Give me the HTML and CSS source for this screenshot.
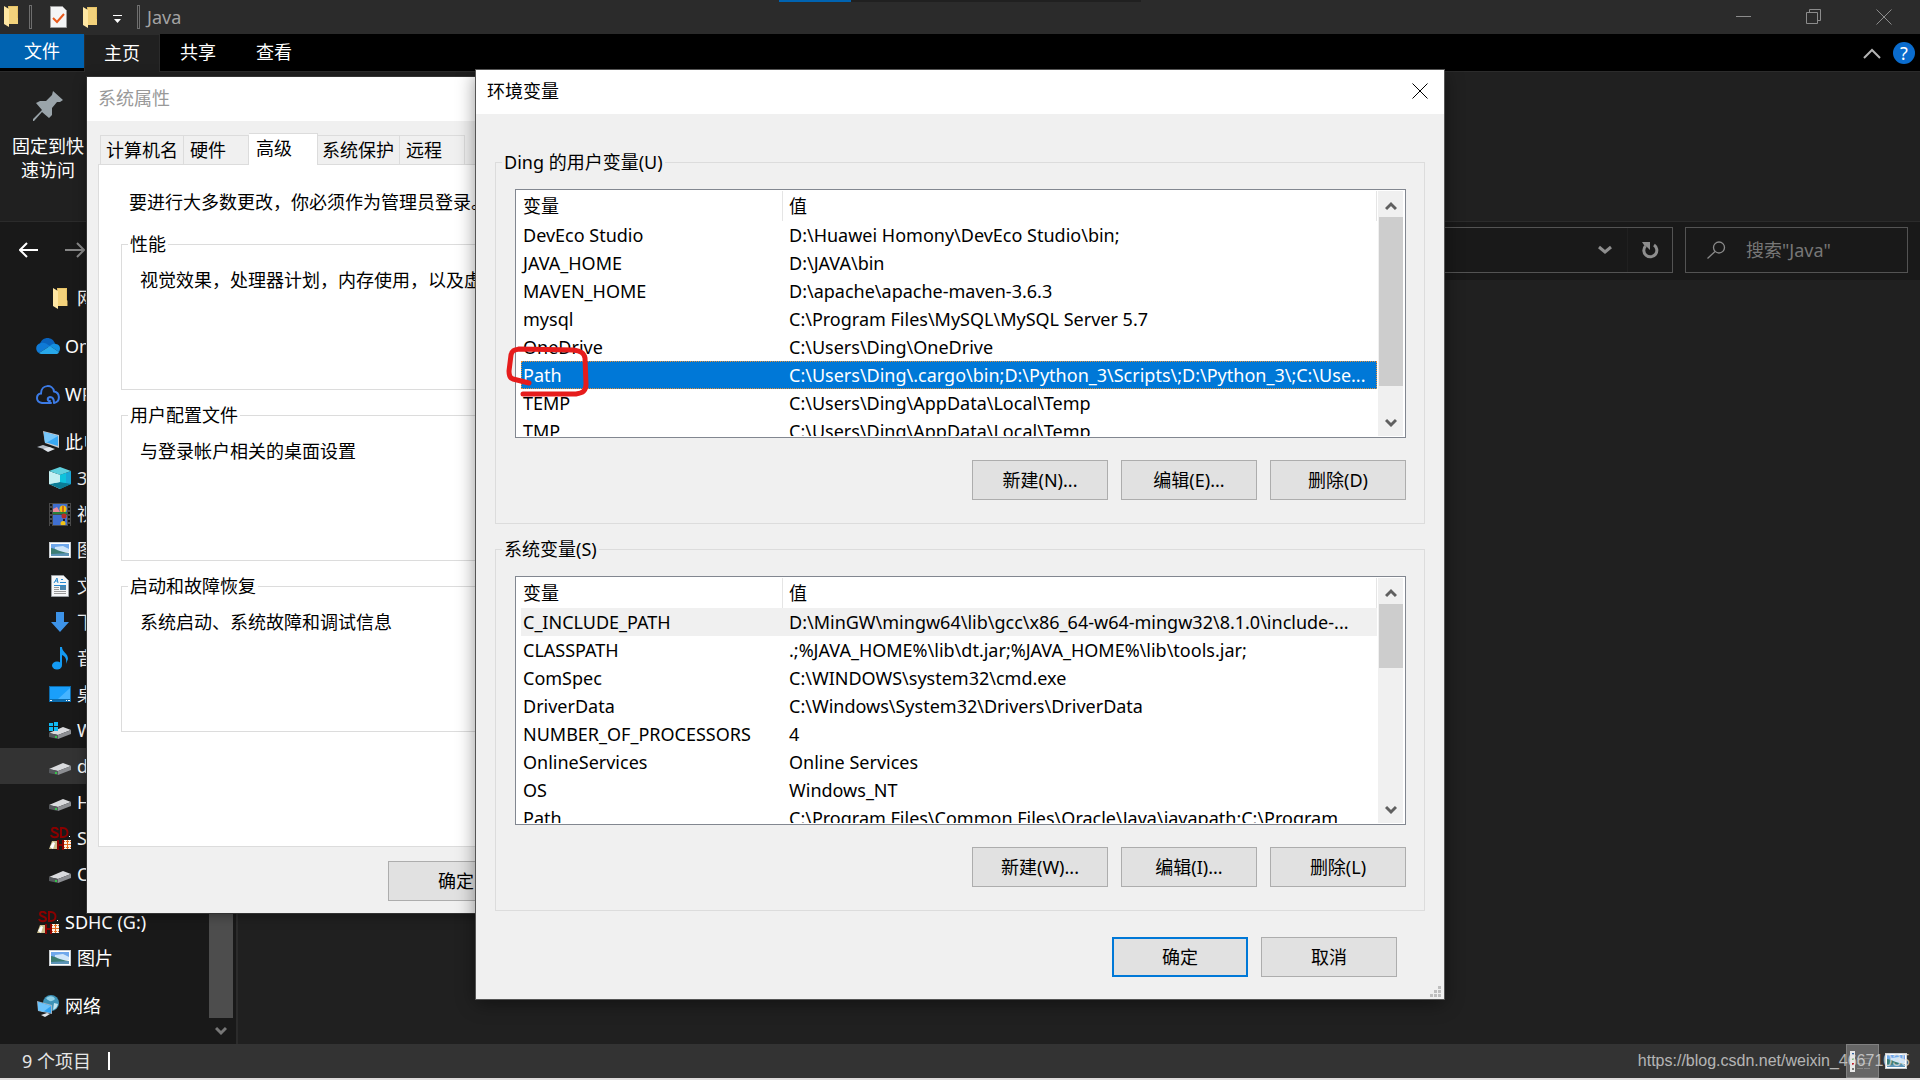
FILE: index.html
```html
<!DOCTYPE html>
<html lang="zh-CN">
<head>
<meta charset="utf-8">
<title>Java</title>
<link rel="stylesheet" href="styles.css">
</head>
<body>
<svg class="defs" width="0" height="0" aria-hidden="true">
  <symbol id="i-folder" viewBox="0 0 14 21"><path fill="#e9c467" d="M4 0h10v12l.500 1v5H5z"/><path fill="#ffe7a3" d="M0 0l5 3v18l-5-3z"/><path fill="#f3d27b" d="M5 1h8v11h1v6H5z"/></symbol>
  <symbol id="i-onedrive" viewBox="0 0 24 16"><path fill="#0a63bd" d="M4 6C6-2 17-2 19 6l-5 4z"/><path fill="#0f7ad6" d="M5 5c3-1 5 0 9 3L3 15C-1 13-1 6 5 5z"/><path fill="#1490df" d="M14 8c3-3 5-2 6-2 4 0 5 5 3 8z"/><path fill="#28a8ea" d="M14 8l9 6c-1 2-2 2-3 2H5c-1 0-2-1-2-1z"/></symbol>
  <symbol id="i-wps" viewBox="0 0 24 19"><path fill="none" stroke="#3c7be6" stroke-width="2" stroke-linecap="round" d="M15 18H6C-1 17 0 9 5 8.500 5-1 17-1 18 6.500c6 1 7 10 0 11.500M18 18c0-3-1-6-4-6-3 .500-3 4 0 4"/></symbol>
  <symbol id="i-pc" viewBox="0 0 24 22"><path fill="#c3c8cf" d="M7 0l16 4v13L9 12z"/><path fill="#39a9f5" d="M8 1l14 4v10L9 11z"/><path fill="#78c8fb" d="M8 1l14 4-12 7H9z"/><path fill="#b5bdc7" d="M1 16l6-2 9 3-5 2z"/><path fill="#dfe4ea" d="M7 18l6-2 6 2-7 3z"/></symbol>
  <symbol id="i-3d" viewBox="0 0 22 22"><path fill="#d7f6f7" d="M0 4l11 4v14L0 17z"/><path fill="#1aa7d6" d="M22 4L11 8v14l11-5z"/><path fill="#5fd0dd" d="M0 4l11-4 11 4-11 4z"/><path fill="#0b7c95" d="M11 15l11 2-11 5-11-5z"/><path fill="#c5f0f2" d="M0 5l11 3v7L0 17z"/><path fill="#0fc3dc" d="M11 8l6-2v10l-6-1z"/></symbol>
  <symbol id="i-video" viewBox="0 0 22 23"><path fill="#4a4a4a" d="M0 0h22v23H0z"/><path fill="#3f6fd0" d="M4 1h14v10H4zM4 12h14v10H4z"/><path stroke="#111" stroke-width="2" stroke-dasharray="2 2" d="M2 1v22M20 1v22"/><path fill="#e98a9b" d="M4 6l4-2 3 5H4z"/><circle cx="14" cy="6" r="3.500" fill="#f3c213"/><path stroke="#b01818" d="M14 3v6"/><path fill="#27813b" d="M4 9h14v2H4z"/><circle cx="15" cy="13" r="2.500" fill="#b82b24"/><path fill="#222" d="M14 16h2v2h-2z"/><circle cx="14" cy="20.500" r="2.500" fill="#f3c213"/><path fill="#4a4a4a" d="M4 22h14v1H4z"/></symbol>
  <symbol id="i-pic" viewBox="0 0 22 16"><path fill="#c9cdd0" d="M0 0h22v16H0z"/><path fill="#fff" d="M1 1h20v14H1z"/><path fill="#6fa8ec" d="M2 2h18v7H2z"/><path fill="#cfe6fa" d="M6 5l8-1 6 3v3H6z"/><path fill="#3c7d73" d="M2 6c4 0 8 4 18 5v3H2z"/><path fill="#5c94b8" d="M2 12l18-1v3H2z"/></symbol>
  <symbol id="i-doc" viewBox="0 0 18 22"><path fill="#f5f7f8" stroke="#9a9fa3" d="M.500.500h12l5 5v16H.500z"/><path stroke="#2889d0" fill="none" d="M3 8l3-5 1 5M4 6h3M10 4.500h2M9 7.500h6M3 10.500h12"/><path stroke="#999" d="M3 12.500h5M3 14.500h5M3 16.500h12M3 18.500h12"/><path fill="#4c86ad" d="M9 11h6v4H9z"/></symbol>
  <symbol id="i-down" viewBox="0 0 18 20"><path fill="#3d93e8" d="M5 0h8v10h5l-9 10L0 10h5z"/></symbol>
  <symbol id="i-music" viewBox="0 0 16 23"><ellipse cx="5" cy="18.500" rx="5" ry="4" fill="#149bf3"/><path fill="#149bf3" d="M8 0h2c0 5 6 6 6 12l-2 5c1-5-1-8-4-9v10H8z"/></symbol>
  <symbol id="i-desk" viewBox="0 0 22 16"><path fill="#0c6cad" d="M0 0h22v16H0z"/><path fill="#1a9ffb" d="M1 1h20v12H1z"/><path fill="#46b4ff" d="M9 13L21 2v11z"/><path stroke="#fff" d="M1 14.500h2M17 14.500h1M19 14.500h2"/></symbol>
  <symbol id="i-drive" viewBox="0 -6 22 18"><path fill="#d9dadd" d="M0 6l14-6 8 3-13 5z"/><path fill="#8c8e92" d="M9 8l13-5v4L9 12z"/><path fill="#55585c" d="M0 6l9 2v4l-9-2z"/><path fill="#35c24a" d="M6 9h2v2H6z"/></symbol>
  <symbol id="i-windrive" viewBox="0 0 22 17"><path fill="#d9dadd" d="M0 11l14-6 8 3-13 5z"/><path fill="#8c8e92" d="M9 13l13-5v4L9 17z"/><path fill="#55585c" d="M0 11l9 2v4l-9-2z"/><path fill="#35c24a" d="M6 14h2v2H6z"/><path fill="#0fb9f2" d="M0 1h4v3H0zM5 0h4v4H5zM0 5h4v4H0zM5 5h4v4H5z"/></symbol>
  <symbol id="i-sd" viewBox="0 0 22 23"><path fill="none" stroke="#8a0000" stroke-width="2" d="M9 3C8 0 3 0 3 3s6 2 6 5-6 3-7 0M12 1v9h2c6 0 6-9 0-9z"/><path fill="#c9bd8b" d="M0 22l3-8h6v8z"/><path fill="#fff" d="M1 20l3-5 2 1-2 6zM20 9h1v1h-1z"/><path fill="#8a0000" d="M8 13h2v4h3v-4h2v10h-2v-4h-3v4H8z"/><path fill="#f8f0e6" d="M15 13h7v9h-7z"/><path stroke="#e36a1e" stroke-dasharray="1 1" d="M15 14.500h7M15 20.500h7"/><path stroke="#e36a1e" d="M15 17.500h7M18.500 13v9"/></symbol>
  <symbol id="i-net" viewBox="0 0 22 22"><circle cx="14" cy="8" r="8" fill="#3d93b8"/><path fill="#8fd0e6" d="M9 3c4-3 8-2 9 1-3 3-6 3-9-1z"/><path fill="#bfe3ef" d="M17 8l4 1c-1 4-3 5-5 6z"/><path fill="#9fb4c4" d="M0 6l15 4v9L1 16z"/><path fill="#2ba1f2" d="M1 7l13 4v7L1 15z"/><path fill="#6cc3fb" d="M1 7l13 4-8 6-5-2z"/><path fill="#dfe4ea" d="M4 20l6-2 3 1-5 3z"/></symbol>
  <symbol id="i-up" viewBox="0 0 12 10"><path fill="none" stroke="currentColor" stroke-width="3" d="M1 8l5-5 5 5"/></symbol>
  <symbol id="i-dn" viewBox="0 0 12 10"><path fill="none" stroke="currentColor" stroke-width="3" d="M1 2l5 5 5-5"/></symbol>
  <symbol id="i-x" viewBox="0 0 16 16"><path fill="none" stroke="currentColor" d="M.500.500l15 15M15.500.500l-15 15"/></symbol>
</svg>

<main class="explorer">
  <header class="titlebar">
    <svg class="tb-folder" width="14" height="21"><use href="#i-folder"/></svg>
    <span class="bar"></span>
    <button class="tb-btn tb-props" aria-label="属性"><svg width="17" height="22" viewBox="0 0 17 22"><path fill="#f4f5f6" stroke="#9a9a9a" d="M.500.500h12l4 4v17H.500z"/><path fill="none" stroke="#e8591c" stroke-width="2" d="M3 12l4 4 7-8"/></svg></button>
    <button class="tb-btn tb-new" aria-label="新建文件夹"><svg width="14" height="21"><use href="#i-folder"/></svg></button>
    <button class="tb-btn tb-more" aria-label="自定义"><svg width="9" height="9" viewBox="0 0 9 9"><path fill="#fff" d="M0 0h9v1H0zM1 4h7L4.500 8z"/></svg></button>
    <span class="bar bar-title"></span>
    <h1 class="tb-title">Java</h1>
    <div class="winctl">
      <button aria-label="最小化"><svg width="16" height="16" viewBox="0 0 16 16"><path stroke="currentColor" d="M0 7.500h15"/></svg></button>
      <button aria-label="还原"><svg width="16" height="16" viewBox="0 0 16 16"><path fill="none" stroke="currentColor" d="M.500 3.500h11v11H.500zM3.500 3.500v-3h11v11h-3"/></svg></button>
      <button aria-label="关闭"><svg width="16" height="16"><use href="#i-x"/></svg></button>
    </div>
    <div class="progress"><span></span></div>
  </header>

  <nav class="tabs">
    <button class="tab tab-file">文件</button>
    <button class="tab tab-on">主页</button>
    <button class="tab">共享</button>
    <button class="tab">查看</button>
    <div class="tabs-end">
      <button aria-label="折叠功能区"><svg width="18" height="12" viewBox="0 0 18 12"><path fill="none" stroke="#b4b4b4" stroke-width="2" d="M1 11l8-8 8 8"/></svg></button>
      <button class="help" aria-label="帮助">?</button>
    </div>
  </nav>

  <section class="ribbon">
    <button class="pin"><svg width="30" height="30" viewBox="0 0 30 30"><path fill="#9aa4aa" d="M20 0l10 9-3 2h-3l-5 6v7l-3 3-7-6-8 9H0v-2l9-9-6-7 4-2h6l6-6z"/></svg><span>固定到快<br>速访问</span></button>
  </section>

  <section class="navbar">
    <div class="arrows">
      <button aria-label="后退"><svg width="20" height="16" viewBox="0 0 20 16"><path fill="none" stroke="#fff" stroke-width="2" d="M19 8H1M8 1L1 8l7 7"/></svg></button>
      <button class="dim" aria-label="前进"><svg width="20" height="16" viewBox="0 0 20 16"><path fill="none" stroke="#868686" stroke-width="2" d="M0 8h18M12 1l7 7-7 7"/></svg></button>
    </div>
    <div class="address">
      <button aria-label="历史"><svg width="14" height="10" viewBox="0 0 14 10"><path fill="none" stroke="#8e8e8e" stroke-width="3" d="M1 2l6 5 6-5"/></svg></button>
      <button class="refresh" aria-label="刷新"><svg width="17" height="18" viewBox="0 0 17 18"><path fill="none" stroke="#8e8e8e" stroke-width="3" d="M12 4a6.500 6.500 0 1 1-8.500 1"/><path fill="#8e8e8e" d="M0 1h8v8L5.500 6.500 2 4z"/></svg></button>
    </div>
    <label class="search"><svg width="19" height="18" viewBox="0 0 19 18"><circle cx="12" cy="6.500" r="5.500" fill="none" stroke="#8a8a8a" stroke-width="1.300"/><path stroke="#8a8a8a" stroke-width="1.300" d="M8 10.500L.500 17.500"/></svg><input type="text" placeholder="搜索&quot;Java&quot;" aria-label="搜索"></label>
  </section>

  <section class="content">
    <aside class="side">
      <ul class="tree">
        <li class="lv2"><svg width="22" height="21"><use href="#i-folder"/></svg>网页</li>
        <li class="grp"><svg width="24" height="16"><use href="#i-onedrive"/></svg>OneDrive</li>
        <li class="grp"><svg width="24" height="19"><use href="#i-wps"/></svg>WPS网盘</li>
        <li class="grp"><svg width="24" height="22"><use href="#i-pc"/></svg>此电脑</li>
        <li class="lv2"><svg width="22" height="22"><use href="#i-3d"/></svg>3D 对象</li>
        <li class="lv2"><svg width="22" height="23"><use href="#i-video"/></svg>视频</li>
        <li class="lv2"><svg width="22" height="16"><use href="#i-pic"/></svg>图片</li>
        <li class="lv2"><svg width="22" height="22"><use href="#i-doc"/></svg>文档</li>
        <li class="lv2"><svg width="22" height="20"><use href="#i-down"/></svg>下载</li>
        <li class="lv2"><svg width="22" height="23"><use href="#i-music"/></svg>音乐</li>
        <li class="lv2"><svg width="22" height="16"><use href="#i-desk"/></svg>桌面</li>
        <li class="lv2"><svg width="22" height="17"><use href="#i-windrive"/></svg>Windows (C:)</li>
        <li class="lv2 sel"><svg width="22" height="18"><use href="#i-drive"/></svg>data (D:)</li>
        <li class="lv2"><svg width="22" height="18"><use href="#i-drive"/></svg>HDD (E:)</li>
        <li class="lv2"><svg width="22" height="23"><use href="#i-sd"/></svg>SDHC (G:)</li>
        <li class="lv2"><svg width="22" height="18"><use href="#i-drive"/></svg>CD (F:)</li>
        <li class="grp"><svg width="24" height="23"><use href="#i-sd"/></svg>SDHC (G:)</li>
        <li class="lv2"><svg width="22" height="16"><use href="#i-pic"/></svg>图片</li>
        <li class="grp"><svg width="24" height="22"><use href="#i-net"/></svg>网络</li>
      </ul>
      <div class="side-scroll"><span class="thumb"></span><svg width="12" height="10"><use href="#i-dn"/></svg></div>
    </aside>
    <div class="files"></div>
  </section>

  <footer class="status">
    <span class="count">9 个项目</span><span class="caret"></span>
    <div class="views">
      <button class="view view-on" aria-label="详细信息"><svg width="21" height="21" viewBox="0 0 21 21"><path fill="#e8e8e8" d="M0 0h5v21H0z"/><path fill="#3465a4" d="M2 2h2v2H2z"/><path fill="#5a9a3c" d="M2 7h2v2H2z"/><path fill="#c02020" d="M2 12h2v2H2z"/><path fill="#777" d="M2 17h2v2H2z"/><path stroke="#888" d="M7 7.500h6M14 7.500h6M7 12.500h6M14 12.500h6M7 17.500h6M14 17.500h6"/></svg></button>
      <button class="view" aria-label="大图标"><svg width="22" height="16"><use href="#i-pic"/></svg></button>
    </div>
    <span class="mark">https://blog.csdn.net/weixin_46671035</span>
  </footer>
</main>

<section class="win sysprop">
  <h2 class="win-title dimmed">系统属性</h2>
  <div class="sp-body">
    <div class="sp-tabs">
      <button class="w83">计算机名</button><button class="w65">硬件</button><button class="on">高级</button><button class="w82">系统保护</button><button class="w65">远程</button>
    </div>
    <div class="sp-panel">
      <p class="sp-note">要进行大多数更改，你必须作为管理员登录。</p>
      <fieldset><legend>性能</legend><p>视觉效果，处理器计划，内存使用，以及虚拟内存</p></fieldset>
      <fieldset><legend>用户配置文件</legend><p>与登录帐户相关的桌面设置</p></fieldset>
      <fieldset><legend>启动和故障恢复</legend><p>系统启动、系统故障和调试信息</p></fieldset>
    </div>
    <div class="btns sp-btns"><button class="btn">确定</button><button class="btn">取消</button><button class="btn">应用(A)</button></div>
  </div>
</section>

<section class="win env">
  <div class="win-title"><h2>环境变量</h2><button class="close" aria-label="关闭"><svg width="16" height="16"><use href="#i-x"/></svg></button></div>
  <div class="env-body">
    <fieldset>
      <legend>Ding 的用户变量(U)</legend>
      <div class="group">
        <div class="list">
          <div class="list-view">
            <table>
              <thead><tr><th class="c1">变量</th><th>值</th></tr></thead>
              <tbody>
                <tr><td>DevEco Studio</td><td>D:\Huawei Homony\DevEco Studio\bin;</td></tr>
                <tr><td>JAVA_HOME</td><td>D:\JAVA\bin</td></tr>
                <tr><td>MAVEN_HOME</td><td>D:\apache\apache-maven-3.6.3</td></tr>
                <tr><td>mysql</td><td>C:\Program Files\MySQL\MySQL Server 5.7</td></tr>
                <tr><td>OneDrive</td><td>C:\Users\Ding\OneDrive</td></tr>
                <tr class="picked"><td>Path</td><td>C:\Users\Ding\.cargo\bin;D:\Python_3\Scripts\;D:\Python_3\;C:\Use...</td></tr>
                <tr><td>TEMP</td><td>C:\Users\Ding\AppData\Local\Temp</td></tr>
                <tr><td>TMP</td><td>C:\Users\Ding\AppData\Local\Temp</td></tr>
              </tbody>
            </table>
          </div>
          <div class="scroll"><svg width="12" height="10"><use href="#i-up"/></svg><div class="track"><span class="thumb-l t-user"></span></div><svg width="12" height="10"><use href="#i-dn"/></svg></div>
        </div>
        <div class="btns"><button class="btn">新建(N)...</button><button class="btn">编辑(E)...</button><button class="btn">删除(D)</button></div>
      </div>
    </fieldset>
    <fieldset>
      <legend>系统变量(S)</legend>
      <div class="group">
        <div class="list">
          <div class="list-view">
            <table>
              <thead><tr><th class="c1">变量</th><th>值</th></tr></thead>
              <tbody>
                <tr class="soft"><td>C_INCLUDE_PATH</td><td>D:\MinGW\mingw64\lib\gcc\x86_64-w64-mingw32\8.1.0\include-...</td></tr>
                <tr><td>CLASSPATH</td><td>.;%JAVA_HOME%\lib\dt.jar;%JAVA_HOME%\lib\tools.jar;</td></tr>
                <tr><td>ComSpec</td><td>C:\WINDOWS\system32\cmd.exe</td></tr>
                <tr><td>DriverData</td><td>C:\Windows\System32\Drivers\DriverData</td></tr>
                <tr><td>NUMBER_OF_PROCESSORS</td><td>4</td></tr>
                <tr><td>OnlineServices</td><td>Online Services</td></tr>
                <tr><td>OS</td><td>Windows_NT</td></tr>
                <tr><td>Path</td><td>C:\Program Files\Common Files\Oracle\Java\javapath;C:\Program</td></tr>
              </tbody>
            </table>
          </div>
          <div class="scroll"><svg width="12" height="10"><use href="#i-up"/></svg><div class="track"><span class="thumb-l t-sys"></span></div><svg width="12" height="10"><use href="#i-dn"/></svg></div>
        </div>
        <div class="btns"><button class="btn">新建(W)...</button><button class="btn">编辑(I)...</button><button class="btn">删除(L)</button></div>
      </div>
    </fieldset>
    <div class="btns env-btns"><button class="btn btn-default">确定</button><button class="btn">取消</button></div>
  </div>
  <svg class="grip" width="11" height="11" viewBox="0 0 11 11"><path fill="#bfbfbf" d="M8 0h3v3H8zM4 4h3v3H4zM8 4h3v3H8zM0 8h3v3H0zM4 8h3v3H4zM8 8h3v3H8z"/></svg>
  <svg class="scribble" width="84" height="54" viewBox="0 0 84 54"><path fill="none" stroke="#e61c1c" stroke-width="5" stroke-linecap="round" stroke-linejoin="round" d="M24 37L8 33C4 32 4 28 4 25L6 9C7 4 10 4 14 3L68 4C76 5 79 7 80 12L81 38C81 45 78 47 71 48H18"/></svg>
</section>
</body>
</html>
```
FILE: styles.css
```css
* { box-sizing: border-box; }
body { margin: 0; font: 18px/24px "Noto Sans", "Noto Sans CJK SC", sans-serif; color: #000; background: #202020; overflow: hidden; }
button { font: inherit; color: inherit; border: 0; background: none; padding: 0; }
h1, h2, p, ul { margin: 0; padding: 0; font-size: inherit; font-weight: normal; }
fieldset { margin: 0; padding: 0; border: 1px solid #dcdcdc; min-width: 0; }
legend { margin-left: 6px; padding: 0 2px; }
svg { display: block; flex: none; }
.defs { position: absolute; }

/* Explorer window */
.explorer { display: flex; flex-direction: column; min-height: 100vh; border-bottom: 2px solid #e0dede; color: #fff; }
.titlebar { position: relative; display: flex; align-items: center; height: 34px; padding-left: 4px; background: #2b2b2b; }
.tb-folder { margin-bottom: 2px; }
.bar { width: 3px; height: 24px; margin-left: 11px; border: 1px solid #6e6e6e; }
.tb-props { margin-left: 18px; }
.tb-new { margin-left: 16px; }
.tb-more { margin: 4px 0 0 16px; }
.bar-title { margin-left: 15px; }
.tb-title { margin-left: 7px; color: #a3a3a3; }
.winctl { display: flex; margin-left: auto; padding-right: 1px; color: #8c8c8c; }
.winctl button { display: grid; place-items: center; width: 70px; height: 34px; }
.progress { position: absolute; left: 779px; top: 0; width: 362px; height: 2px; background: #202020; }
.progress span { display: block; width: 72px; height: 2px; background: #0063b1; }

.tabs { display: flex; height: 38px; background: #000; border-bottom: 1px solid #2b2b2b; }
.tab { width: 76px; height: 38px; padding-bottom: 2px; }
.tab-file { width: 84px; height: 34px; padding: 0; background: #0063b1; }
.tab-on { background: #202020; border: 1px solid #2b2b2b; border-bottom: 0; }
.tabs-end { display: flex; align-items: center; gap: 12px; margin-left: auto; padding-right: 5px; }
.help { width: 22px; height: 22px; line-height: 22px; border-radius: 50%; background: #0a6cce; }

.ribbon { height: 150px; background: #202020; border-bottom: 1px solid #2b2b2b; }
.pin { display: flex; flex-direction: column; align-items: center; gap: 13px; width: 96px; padding-top: 19px; }

.navbar { display: flex; align-items: flex-start; gap: 12px; height: 58px; padding: 5px 12px 0 19px; background: #191919; }
.arrows { display: flex; align-items: center; gap: 26px; height: 46px; width: 300px; }
.address { display: flex; flex: 1; justify-content: flex-end; height: 46px; border: 1px solid #535353; }
.address button { display: grid; place-items: center; width: 45px; }
.address .refresh { border-left: 1px solid #202020; }
.search { display: flex; align-items: center; gap: 20px; width: 223px; height: 46px; padding-left: 21px; border: 1px solid #535353; }
.search input { flex: 1; min-width: 0; padding: 0; border: 0; background: none; font: inherit; color: #fff; }
.search input::placeholder { color: #777; opacity: 1; }

.content { display: flex; flex: 1; }
.side { display: flex; width: 238px; background: #191919; border-right: 2px solid #2b2b2b; }
.tree { flex: 1; min-width: 0; list-style: none; }
.tree li { display: flex; align-items: center; height: 36px; white-space: nowrap; }
.lv2 { gap: 6px; padding-left: 49px; }
.tree .grp { gap: 5px; margin-top: 12px; padding-left: 36px; }
.tree .sel { background: #333; }
.side-scroll { display: flex; flex-direction: column; align-items: center; width: 24px; margin-right: 3px; padding-bottom: 8px; gap: 8px; color: #777; }
.thumb { flex: 1; width: 24px; background: #4d4d4d; }
.files { flex: 1; background: #202020; }

.status { position: relative; display: flex; align-items: center; height: 34px; padding: 0 13px 0 22px; background: #333; }
.count { color: #e6e6e6; }
.caret { width: 2px; height: 18px; margin-left: 17px; background: #fff; }
.views { display: flex; align-items: center; margin-left: auto; gap: 6px; }
.view-on { display: grid; place-items: center; width: 33px; height: 34px; background: #666; border: 1px solid #808080; }
.view-on svg { margin-right: 4px; }
.mark { position: absolute; right: 10px; top: 5px; font: 16px/24px "Liberation Sans", sans-serif; color: rgba(225, 225, 225, .75); }

/* Dialog windows */
.win { position: absolute; background: #f0f0f0; }
.win-title { display: flex; align-items: center; justify-content: space-between; height: 44px; padding: 0 16px 2px 11px; background: #fff; }
.dimmed { color: #999; }
.btns { display: flex; justify-content: flex-end; gap: 13px; }
.btn { width: 136px; height: 40px; background: #e1e1e1; border: 1px solid #adadad; }
.btn-default { border: 2px solid #0078d7; }

.sysprop { left: 87px; top: 77px; width: 746px; box-shadow: 0 0 0 1px #333, 0 2px 12px rgba(0, 0, 0, .4); }
.sp-body { padding: 12px 11px; }
.sp-tabs { display: flex; align-items: flex-end; height: 31px; padding-left: 2px; }
.sp-tabs button { height: 29px; padding-left: 5px; text-align: left; border: 1px solid #dcdcdc; border-width: 1px 1px 0 0; white-space: nowrap; }
.sp-tabs button:first-child { border-left-width: 1px; }
.sp-tabs .w83 { width: 84px; }
.sp-tabs .w82 { width: 82px; padding-left: 4px; }
.sp-tabs .w65 { width: 65px; padding-left: 6px; }
.sp-tabs .on { width: 69px; height: 32px; margin-bottom: -1px; padding: 0 0 3px 7px; background: #fff; z-index: 1; }
.sp-panel { display: flex; flex-direction: column; gap: 13px; min-height: 683px; padding: 25px 22px; background: #fff; border: 1px solid #dcdcdc; }
.sp-note { padding-left: 8px; margin-bottom: 5px; }
.sp-panel fieldset { height: 158px; }
.sp-panel fieldset p { padding: 12px 18px 0; }
.sp-btns { margin-top: 14px; }

.env { left: calc(50% - 484px); top: 70px; width: 968px; box-shadow: 0 0 0 1px #555, 0 4px 18px rgba(0, 0, 0, .45); }
.env-body { padding: 36px 19px 22px; }
.env-body fieldset + fieldset { margin-top: 13px; }
.group { padding: 15px 18px 23px 19px; }
.list { display: flex; height: 249px; margin-bottom: 22px; padding: 1px 2px 1px 0; background: #fff; border: 1px solid #828790; }
.list-view { flex: 1; min-width: 0; overflow: hidden; padding-left: 5px; }
table { width: 100%; table-layout: fixed; border-collapse: separate; border-spacing: 0; }
th, td { height: 28px; padding: 0 2px; text-align: left; font-weight: normal; white-space: nowrap; overflow: hidden; }
th { height: 30px; border-right: 1px solid #e5e5e5; }
.c1 { width: 262px; }
th + th, td + td { padding-left: 6px; }
.picked { background: #0078d7; color: #fff; outline: 1px dotted #e8913a; outline-offset: -1px; }
.soft { background: #f0f0f0; }
.scroll { display: flex; flex-direction: column; align-items: center; width: 25px; margin-left: 1px; padding: 10px 0 8px; gap: 6px; background: #f0f0f0; color: #606060; }
.track { flex: 1; width: 24px; }
.thumb-l { display: block; background: #cdcdcd; }
.t-user { height: 169px; }
.t-sys { height: 64px; }
.env-btns { margin-top: 26px; padding-right: 28px; }
.grip { position: absolute; right: 3px; bottom: 2px; }
.scribble { position: absolute; left: 29px; top: 276px; }
```
